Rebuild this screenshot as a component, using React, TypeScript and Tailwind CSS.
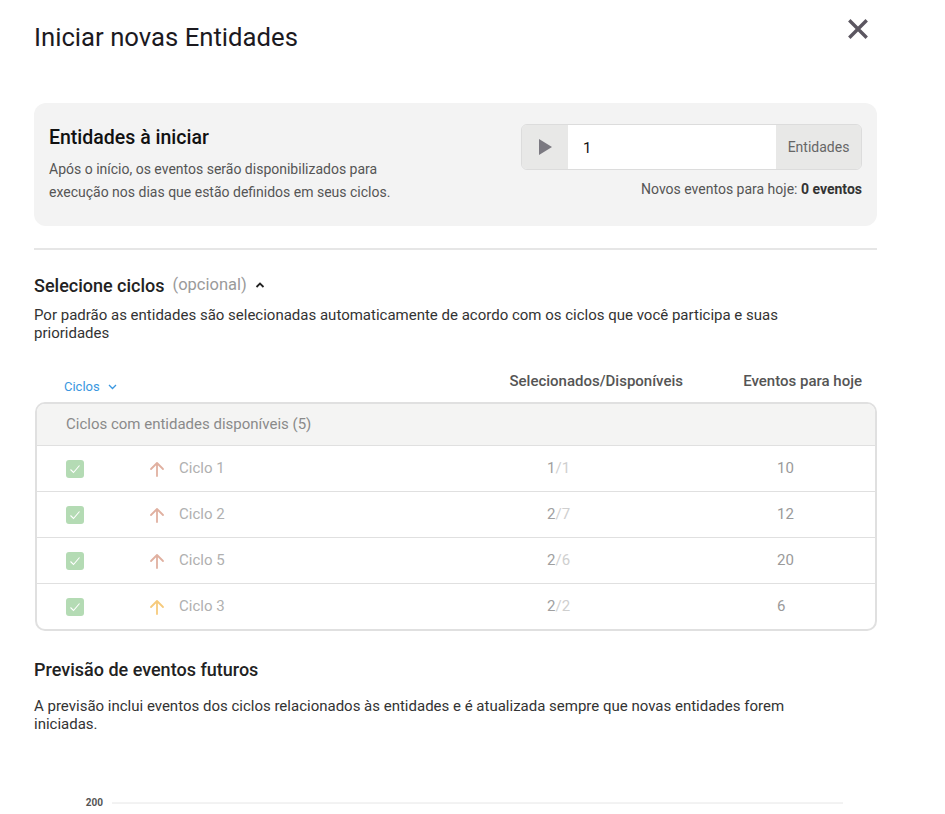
import React from "react";

const rows = [
  { name: "Ciclo 1", sel: "1", disp: "1", ev: "10", arrow: "#e0b0a0" },
  { name: "Ciclo 2", sel: "2", disp: "7", ev: "12", arrow: "#e0b0a0" },
  { name: "Ciclo 5", sel: "2", disp: "6", ev: "20", arrow: "#e0b0a0" },
  { name: "Ciclo 3", sel: "2", disp: "2", ev: "6", arrow: "#f6ca7c" },
];

function ArrowUp({ color }: { color: string }) {
  return (
    <svg width="16" height="16" viewBox="0 0 16 16" fill="none">
      <path d="M8 15V2M2 8l6-6 6 6" stroke={color} strokeWidth="1.8" strokeLinecap="round" strokeLinejoin="round" />
    </svg>
  );
}

export default function App() {
  return (
    <div className="bg-white w-[945px] h-[814px] overflow-hidden text-[#222]" style={{ fontFamily: "Roboto, 'Liberation Sans', sans-serif" }}>
      <div className="pl-[34px] w-[877px]">
        {/* Header */}
        <div className="flex items-start justify-between pt-[21px]">
          <h1 className="text-[25.7px] leading-[32px] font-normal text-[#1c1a1f]">Iniciar novas Entidades</h1>
          <button className="mt-[-4px] mr-[7px] w-[24px] h-[24px] flex items-center justify-center">
            <svg width="22" height="22" viewBox="0 0 22 22">
              <path d="M3.5 3.5L18.5 18.5M18.5 3.5L3.5 18.5" stroke="#5b5660" strokeWidth="3.4" strokeLinecap="square" />
            </svg>
          </button>
        </div>

        {/* Card */}
        <div className="mt-[50px] bg-[#f3f3f3] rounded-[12px] h-[123px] flex justify-between">
          <div className="pl-[15px] pt-[23px]">
            <div className="text-[19.5px] leading-[24px] font-medium text-[#111]">Entidades à iniciar</div>
            <p className="mt-[8px] max-w-[360px] text-[14px] leading-[23px] text-[#555]">
              Após o início, os eventos serão disponibilizados para execução nos dias que estão definidos em seus ciclos.
            </p>
          </div>
          <div className="pr-[15px] pt-[21px] flex flex-col items-end">
            <div className="flex h-[46px] w-[341px] rounded-[6px] border border-[#dcdcdc] overflow-hidden">
              <div className="w-[46px] bg-[#e8e8e7] flex items-center justify-center">
                <svg width="14" height="16" viewBox="0 0 14 16">
                  <path d="M1 0L14 8L1 16Z" fill="#7b7981" />
                </svg>
              </div>
              <div className="flex-1 bg-white flex items-center pl-[15px] pt-[2px] text-[15px] text-[#111]">1</div>
              <div className="w-[85px] bg-[#e8e8e7] flex items-center justify-center text-[14px] text-[#666]">Entidades</div>
            </div>
            <div className="mt-[10px] text-[14px] leading-[18px] text-[#555]">
              Novos eventos para hoje: <span className="font-bold text-[#333]">0 eventos</span>
            </div>
          </div>
        </div>

        <div className="mt-[22px] h-[2px] bg-[#e6e6e6]" />

        {/* Selecione ciclos */}
        <div className="mt-[23px] flex items-center h-[24px]">
          <span className="text-[18px] font-medium text-[#222]">Selecione ciclos</span>
          <span className="ml-[8px] text-[16.5px] text-[#9a9a9a]">(opcional)</span>
          <svg className="ml-[8px]" width="10" height="8" viewBox="0 0 10 8">
            <path d="M1.5 6L5 2.5L8.5 6" stroke="#222" strokeWidth="1.8" fill="none" />
          </svg>
        </div>
        <p className="mt-[9px] w-[780px] text-[15px] leading-[18px] text-[#333]">
          Por padrão as entidades são selecionadas automaticamente de acordo com os ciclos que você participa e suas prioridades
        </p>

        {/* Column headers */}
        <div className="mt-[29px] flex h-[31px]">
          <div className="w-[476px] pl-[30px] flex items-center h-[20px] mt-[6px]">
            <span className="text-[13px] text-[#3a97e0]">Ciclos</span>
            <svg className="ml-[8px]" width="9" height="6" viewBox="0 0 9 6">
              <path d="M1 1L4.5 4.5L8 1" stroke="#3a97e0" strokeWidth="1.3" fill="none" />
            </svg>
          </div>
          <div className="w-[234px] whitespace-nowrap text-[15px] font-medium text-[#555] leading-[20px]">Selecionados/Disponíveis</div>
          <div className="flex-1 whitespace-nowrap text-right pr-[15px] text-[15px] font-medium text-[#555] leading-[20px]">Eventos para hoje</div>
        </div>

        {/* Table */}
        <div className="ml-[1px] w-[842px] border-2 border-[#e0e0e0] rounded-[10px] overflow-hidden">
          <div className="h-[41px] bg-[#f4f4f3] flex items-center pl-[29px] text-[15px] text-[#8a8a8a]">
            Ciclos com entidades disponíveis (5)
          </div>
          {rows.map((r) => (
            <div key={r.name} className="h-[46px] border-t border-[#e0e0e0] flex items-center text-[15px]">
              <div className="w-[473px] flex items-center pl-[29px]">
                <div className="w-[18px] h-[18px] rounded-[3px] bg-[#b4dbb4] flex items-center justify-center">
                  <svg width="12" height="10" viewBox="0 0 12 10">
                    <path d="M1.5 5.5L4.5 8.5L10.5 1.5" stroke="#fff" strokeWidth="1.1" fill="none" />
                  </svg>
                </div>
                <div className="ml-[65px]">
                  <ArrowUp color={r.arrow} />
                </div>
                <span className="ml-[14px] text-[#b0b0b0]">{r.name}</span>
              </div>
              <div className="w-[234px] pl-[37px]">
                <span className="text-[#a0a0a0]">{r.sel}</span>
                <span className="text-[#cfcfcf]">/{r.disp}</span>
              </div>
              <div className="pl-[33px] text-[#9a9a9a]">{r.ev}</div>
            </div>
          ))}
        </div>

        {/* Previsão */}
        <div className="mt-[27px] text-[18px] leading-[24px] font-medium text-[#222]">Previsão de eventos futuros</div>
        <p className="mt-[15px] w-[780px] text-[15px] leading-[18px] text-[#333]">
          A previsão inclui eventos dos ciclos relacionados às entidades e é atualizada sempre que novas entidades forem iniciadas.
        </p>

        {/* Chart */}
        <div className="mt-[62px] flex items-center">
          <span className="w-[69px] text-right text-[10px] font-bold text-[#555]">200</span>
          <svg className="ml-[9px]" width="731" height="2" viewBox="0 0 731 2">
            <line x1="0" y1="1" x2="731" y2="1" stroke="#e6e6e6" strokeWidth="1" />
          </svg>
        </div>
      </div>
    </div>
  );
}
